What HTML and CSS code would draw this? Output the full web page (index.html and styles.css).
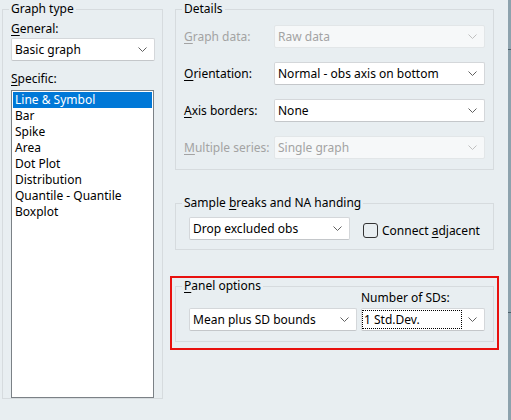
FILE: index.html
```html
<!DOCTYPE html>
<html lang="en">
<head>
    <meta charset="UTF-8">
    <title>Graph Options</title>
    <link rel="stylesheet" href="styles.css">
</head>
<body>

<div class="dialog">

    <fieldset class="group graph-type">
        <legend>Graph type</legend>
        <div class="label"><u>G</u>eneral:</div>
        <div class="combo general">
            <span>Basic graph</span>
            <svg class="chev" width="9" height="5" viewBox="0 0 9 5"><path d="M0.5 0.5 L4.5 4.5 L8.5 0.5" /></svg>
        </div>
        <div class="label specific-label"><u>S</u>pecific:</div>
        <div class="listbox">
            <div class="item selected">Line &amp; Symbol</div>
            <div class="item">Bar</div>
            <div class="item">Spike</div>
            <div class="item">Area</div>
            <div class="item">Dot Plot</div>
            <div class="item">Distribution</div>
            <div class="item">Quantile - Quantile</div>
            <div class="item">Boxplot</div>
        </div>
    </fieldset>

    <div class="right-col">

        <fieldset class="group details">
            <legend>Details</legend>
            <div class="form-grid">
                <div class="label disabled"><u>G</u>raph data:</div>
                <div class="combo disabled">
                    <span>Raw data</span>
                    <svg class="chev" width="9" height="5" viewBox="0 0 9 5"><path d="M0.5 0.5 L4.5 4.5 L8.5 0.5" /></svg>
                </div>

                <div class="label"><u>O</u>rientation:</div>
                <div class="combo">
                    <span>Normal - obs axis on bottom</span>
                    <svg class="chev" width="9" height="5" viewBox="0 0 9 5"><path d="M0.5 0.5 L4.5 4.5 L8.5 0.5" /></svg>
                </div>

                <div class="label"><u>A</u>xis borders:</div>
                <div class="combo">
                    <span>None</span>
                    <svg class="chev" width="9" height="5" viewBox="0 0 9 5"><path d="M0.5 0.5 L4.5 4.5 L8.5 0.5" /></svg>
                </div>

                <div class="label disabled"><u>M</u>ultiple series:</div>
                <div class="combo disabled">
                    <span>Single graph</span>
                    <svg class="chev" width="9" height="5" viewBox="0 0 9 5"><path d="M0.5 0.5 L4.5 4.5 L8.5 0.5" /></svg>
                </div>
            </div>
        </fieldset>

        <fieldset class="group sample">
            <legend>Sample <u>b</u>reaks and NA handing</legend>
            <div class="sample-row">
                <div class="combo drop">
                    <span>Drop excluded obs</span>
                    <svg class="chev" width="9" height="5" viewBox="0 0 9 5"><path d="M0.5 0.5 L4.5 4.5 L8.5 0.5" /></svg>
                </div>
                <span class="checkbox"></span>
                <span class="check-label">Connect <u>a</u>djacent</span>
            </div>
        </fieldset>

        <div class="highlight">
            <fieldset class="group panel">
                <legend><u>P</u>anel options</legend>
                <div class="panel-row">
                    <div class="combo mean">
                        <span>Mean plus SD bounds</span>
                        <svg class="chev" width="9" height="5" viewBox="0 0 9 5"><path d="M0.5 0.5 L4.5 4.5 L8.5 0.5" /></svg>
                    </div>
                    <div class="sd-col">
                        <div class="label sd-label">Number of SDs:</div>
                        <div class="combo sd">
                            <span class="focus">1 Std.Dev.</span>
                            <svg class="chev" width="9" height="5" viewBox="0 0 9 5"><path d="M0.5 0.5 L4.5 4.5 L8.5 0.5" /></svg>
                        </div>
                    </div>
                </div>
            </fieldset>
        </div>

    </div>

    <div class="edge">
        <span class="mark m1"></span>
        <span class="mark m2"></span>
    </div>

</div>

</body>
</html>
```

FILE: styles.css
```css
body {
    margin: 0;
    background-color: #e8eef1;
    font-family: "Noto Sans", "Open Sans", sans-serif;
    font-size: 12px;
    color: #000;
    height: 420px;
    overflow: hidden;
}

.dialog {
    display: flex;
    padding: 1px 0 0 2px;
    height: 419px;
}

u {
    text-decoration-thickness: 1px;
    text-underline-offset: 2px;
}

/* group boxes */
.group {
    margin: 0;
    border: 1px solid #d6dbde;
    box-sizing: border-box;
    padding: 0 8px 8px 8px;
    min-width: 0;
}

.group legend {
    line-height: 16px;
    padding: 0 2px;
    margin-left: -2px;
}

.label {
    line-height: 16px;
    white-space: nowrap;
}

.disabled {
    color: #a3a3a3;
}

/* combo boxes */
.combo {
    display: flex;
    align-items: center;
    justify-content: space-between;
    height: 23px;
    box-sizing: border-box;
    background-color: #fff;
    border: 1px solid #d4d7da;
    border-bottom-color: #c4c7ca;
    border-radius: 2px;
    padding: 0 7px 0 3px;
    white-space: nowrap;
}

.combo.disabled {
    background-color: #f6f8f9;
    border-color: #e2e6e8;
}

.chev path {
    fill: none;
    stroke: #606060;
    stroke-width: 1;
}

.combo.disabled .chev path {
    stroke: #c0c0c0;
}

/* left: graph type */
.graph-type {
    width: 161px;
    height: 398px;
    padding: 4px 7px 8px 8px;
    flex-shrink: 0;
}

.general {
    margin-top: 1px;
}

.specific-label {
    margin-top: 10px;
}

.listbox {
    margin-top: 3px;
    width: 143px;
    height: 308px;
    box-sizing: border-box;
    background-color: #fff;
    border: 1px solid #7b8186;
    padding: 1px;
}

.item {
    height: 16px;
    line-height: 16px;
    padding-left: 2px;
}

.item.selected {
    background-color: #0078d7;
    color: #fff;
}

/* right column */
.right-col {
    display: flex;
    flex-direction: column;
    margin-left: 7px;
    width: 329px;
}

.details,
.sample {
    margin-left: 5px;
    width: 319px;
}

.details {
    padding-top: 8px;
    padding-bottom: 10px;
}

.form-grid {
    display: grid;
    grid-template-columns: 90px 211px;
    grid-auto-rows: 23px;
    row-gap: 14px;
    align-items: center;
}

.sample {
    margin-top: 25px;
    padding-top: 6px;
    padding-bottom: 9px;
}

.sample-row {
    display: flex;
    align-items: center;
    padding-left: 5px;
}

.drop {
    width: 161px;
}

.checkbox {
    width: 15px;
    height: 15px;
    box-sizing: border-box;
    border: 1px solid #333;
    border-radius: 3px;
    margin-left: 13px;
    margin-top: 4px;
}

.check-label {
    margin-left: 4px;
    margin-top: 4px;
}

/* red highlight around panel options */
.highlight {
    margin-top: 26px;
    border: 2px solid #e8100e;
    padding: 0 3px 6px 3px;
}

.panel {
    width: 319px;
    padding-bottom: 10px;
}

.panel-row {
    display: flex;
    align-items: flex-end;
    padding-left: 5px;
}

.mean {
    width: 168px;
}

.sd-col {
    margin-left: 4px;
    margin-top: -4px;
}

.sd-label {
    margin-bottom: 2px;
}

.sd {
    width: 124px;
    padding-left: 1px;
}

.focus {
    display: block;
    width: 98px;
    line-height: 17px;
    box-sizing: border-box;
    outline: 1px dotted #000;
    padding-left: 1px;
}

/* strip of the window behind */
.edge {
    margin-left: auto;
    width: 3px;
    margin-top: -1px;
    background-color: #8da2ad;
    display: flex;
    flex-direction: column;
}

.mark {
    height: 1px;
    background-color: #4b5f6a;
}

.m1 {
    margin-top: 49px;
}

.m2 {
    margin-top: 262px;
}
```
